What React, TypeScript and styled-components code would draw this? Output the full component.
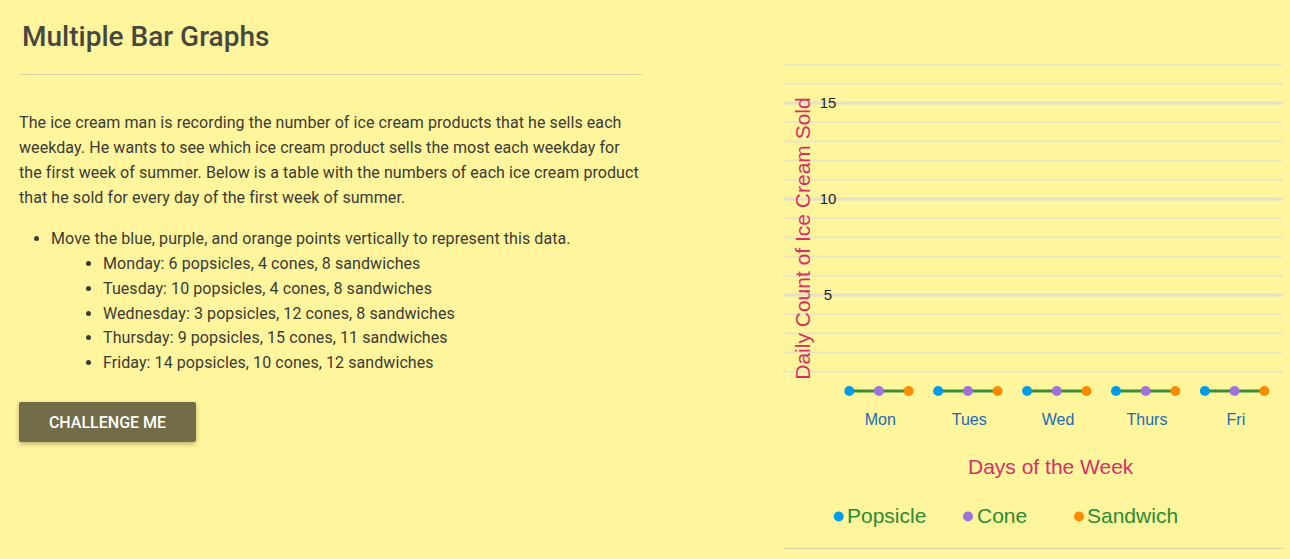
import React from "react";
import styled, { createGlobalStyle } from "styled-components";

const GlobalStyle = createGlobalStyle`
  html, body {
    margin: 0;
    padding: 0;
    background: #fff59d;
  }
  body {
    font-family: Roboto, "Noto Sans", Arial, sans-serif;
    color: #3b3b35;
  }
`;

const Page = styled.div`
  display: flex;
  align-items: flex-start;
  width: 1290px;
  height: 559px;
  overflow: hidden;
`;

const LeftColumn = styled.section`
  width: 623px;
  margin-left: 19px;
  display: flex;
  flex-direction: column;
  align-items: flex-start;
`;

const Title = styled.h1`
  margin: 21px 0 0 3px;
  font-size: 28px;
  line-height: 32px;
  font-weight: 500;
  color: #47473f;
`;

const Divider = styled.hr`
  align-self: stretch;
  margin: 21px 0 0;
  border: 0;
  height: 1px;
  background: #dbd5a6;
`;

const Paragraph = styled.p`
  margin: 35px 0 0;
  font-size: 16px;
  line-height: 25px;
  letter-spacing: 0.08px;
`;

const List = styled.ul<{ $nested?: boolean }>`
  margin: ${(p) => (p.$nested ? "0" : "17px 0 0")};
  padding-left: ${(p) => (p.$nested ? "52px" : "32px")};
  font-size: 16px;
  line-height: 24.85px;
  letter-spacing: 0.08px;
  list-style: disc;
`;

const Item = styled.li``;

const Button = styled.button`
  margin-top: 26px;
  width: 177px;
  height: 40px;
  border: 0;
  border-radius: 2px;
  background: #736c48;
  color: #ffffff;
  font-family: Roboto, Arial, sans-serif;
  font-weight: 500;
  font-size: 16px;
  letter-spacing: 0;
  text-transform: uppercase;
  box-shadow: 0 2px 5px rgba(0, 0, 0, 0.28);
  cursor: pointer;
`;

const ChartColumn = styled.section`
  width: 500px;
  margin-left: 141px;
  margin-top: 56px;
`;

const ChartSvg = styled.svg`
  display: block;
  font-family: "Liberation Sans", Arial, sans-serif;
`;

const days = ["Mon", "Tues", "Wed", "Thurs", "Fri"];
const legend = [
  { label: "Popsicle", color: "#039be5", dot: 55.7, text: 64 },
  { label: "Cone", color: "#9f72db", dot: 185, text: 194 },
  { label: "Sandwich", color: "#fb8c00", dot: 296, text: 304 },
];

const yFor = (v: number) => 335 - 19.2 * v;

function Chart() {
  const lines = Array.from({ length: 18 }, (_, i) => i + 1);
  return (
    <ChartSvg width={500} height={495} viewBox="0 0 500 495">
      {lines.map((v) => (
        <line
          key={v}
          x1={0}
          x2={500}
          y1={yFor(v)}
          y2={yFor(v)}
          stroke={v % 5 === 0 ? "#e3e0cc" : "#ebe6c0"}
          strokeWidth={v % 5 === 0 ? 3 : 2}
        />
      ))}
      {[15, 10, 5].map((v) => (
        <text
          key={v}
          x={45}
          y={yFor(v) + 5}
          textAnchor="middle"
          fontSize={15}
          fill="#1e1e1e"
        >
          {v}
        </text>
      ))}
      <text
        transform="translate(26.5 182.5) rotate(-90)"
        textAnchor="middle"
        fontSize={21}
        fill="#d63069"
      >
        Daily Count of Ice Cream Sold
      </text>
      {days.map((d, i) => {
        const x0 = 66.3 + 88.9 * i;
        const y = yFor(0);
        return (
          <g key={d}>
            <line x1={x0} x2={x0 + 59.4} y1={y} y2={y} stroke="#3a8d35" strokeWidth={3} />
            <circle cx={x0} cy={y} r={5} fill="#039be5" />
            <circle cx={x0 + 29.7} cy={y} r={5} fill="#9f72db" />
            <circle cx={x0 + 59.4} cy={y} r={5} fill="#fb8c00" />
            <text
              x={x0 + 31}
              y={369}
              textAnchor="middle"
              fontSize={16}
              fill="#1a6bb8"
            >
              {d}
            </text>
          </g>
        );
      })}
      <text x={267.7} y={418} textAnchor="middle" fontSize={21} fill="#d63069">
        Days of the Week
      </text>
      {legend.map((l) => (
        <g key={l.label}>
          <circle cx={l.dot} cy={460.5} r={5} fill={l.color} />
          <text x={l.text} y={467} fontSize={21} fill="#2b8a33">
            {l.label}
          </text>
        </g>
      ))}
      <line x1={0} x2={500} y1={492.5} y2={492.5} stroke="#d8d2a2" strokeWidth={1} />
    </ChartSvg>
  );
}

export default function App() {
  return (
    <>
      <GlobalStyle />
      <Page>
        <LeftColumn>
          <Title>Multiple Bar Graphs</Title>
          <Divider />
          <Paragraph>
            The ice cream man is recording the number of ice cream products that he sells each
            weekday. He wants to see which ice cream product sells the most each weekday for
            the first week of summer. Below is a table with the numbers of each ice cream product
            that he sold for every day of the first week of summer.
          </Paragraph>
          <List>
            <Item>
              Move the blue, purple, and orange points vertically to represent this data.
              <List $nested>
                <Item>Monday: 6 popsicles, 4 cones, 8 sandwiches</Item>
                <Item>Tuesday: 10 popsicles, 4 cones, 8 sandwiches</Item>
                <Item>Wednesday: 3 popsicles, 12 cones, 8 sandwiches</Item>
                <Item>Thursday: 9 popsicles, 15 cones, 11 sandwiches</Item>
                <Item>Friday: 14 popsicles, 10 cones, 12 sandwiches</Item>
              </List>
            </Item>
          </List>
          <Button>Challenge me</Button>
        </LeftColumn>
        <ChartColumn>
          <Chart />
        </ChartColumn>
      </Page>
    </>
  );
}
